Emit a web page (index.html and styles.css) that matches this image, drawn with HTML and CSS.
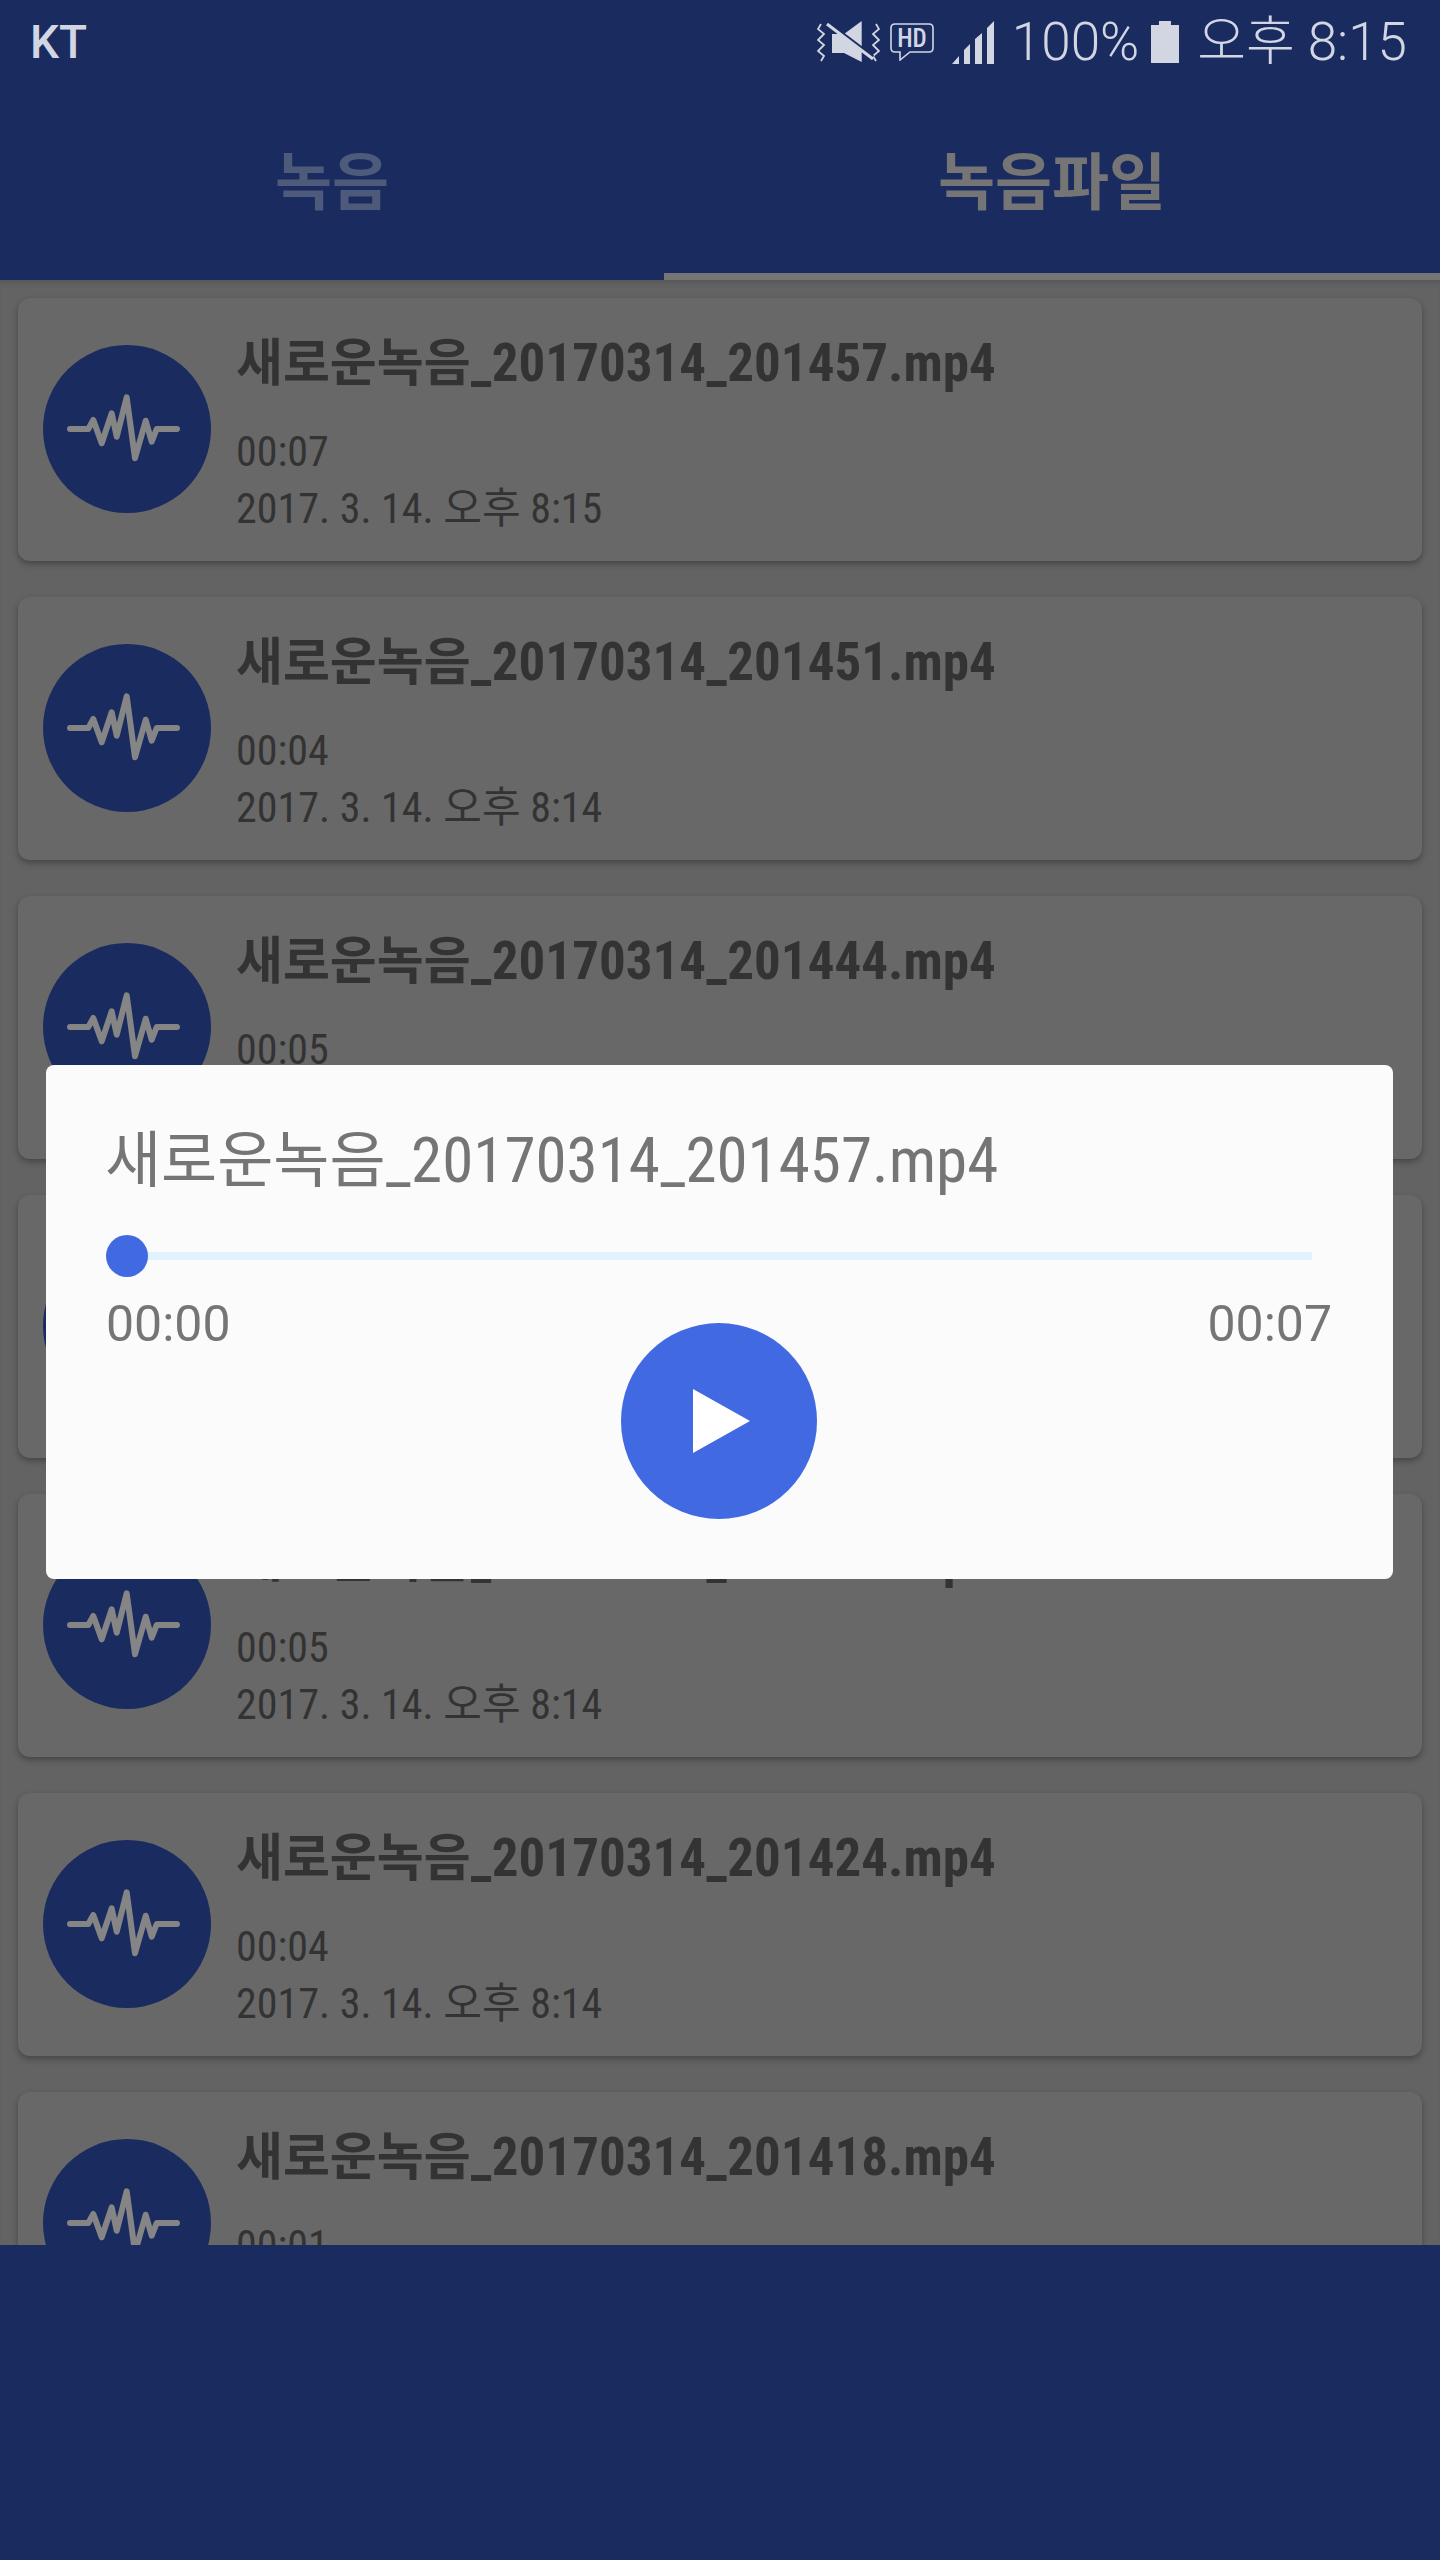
FILE: index.html
```html
<!DOCTYPE html>
<html lang="ko">
<head>
<meta charset="utf-8">
<title>녹음파일</title>
<link rel="stylesheet" href="styles.css">
</head>
<body>
<div class="app">
  <header class="top">
    <div class="status">
      <span class="carrier">KT</span>
      <div class="status-right">
        <svg class="ic-mute" viewBox="0 0 63 42"><path d="M4 3 1 8l6 5-6 6 6 5-6 6 6 5-3 5M59 3l3 5-6 5 6 6-6 5 6 6-6 5 3 5" fill="none" stroke="#d2d6e3" stroke-width="1.8"/><path d="M15 13H27L44.7 0V41L27 32H15Z" fill="#d2d6e3"/><path d="M10 1 56 36" stroke="#1a2b5f" stroke-width="3.5"/><path d="M10 3 56 38" stroke="#d2d6e3" stroke-width="3"/></svg>
        <svg class="ic-hd" viewBox="0 0 44 38"><path d="M5 1H39Q43 1 43 5V25Q43 29 39 29H20L10 37V29H5Q1 29 1 25V5Q1 1 5 1Z" fill="none" stroke="#d2d6e3" stroke-width="1.6"/><text class="hd-text" x="22" y="24" text-anchor="middle">HD</text></svg>
        <svg class="ic-signal" viewBox="0 0 42 43"><path d="M0 43 7 35V43ZM12 43V29L18 23V43ZM23 43V18L30 12V43ZM35 43V7L42 0V43Z" fill="#d2d6e3"/></svg>
        <span class="pct">100%</span>
        <svg class="ic-batt" viewBox="0 0 28 42"><path d="M8 0H20V4H28V42H0V4H8Z" fill="#d2d6e3"/></svg>
        <span class="clock">오후 8:15</span>
      </div>
    </div>
    <nav class="tabs">
      <div class="tab">녹음</div>
      <div class="tab tab-on">녹음파일</div>
    </nav>
  </header>

  <main class="list">
    <article class="card">
      <div class="avatar"><svg viewBox="0 0 168 168"><circle cx="84" cy="84" r="84" fill="#1a2b60"/><path class="wave" d="M27 84H45.3L50.3 75 58.7 98.3 68.7 68.3 73.7 91.7 83.7 52.3 92 113.3 102.7 75.7 108.7 96.7 113.7 84H134"/></svg></div>
      <div class="info"><h2 class="name"><span class="name-ko">새로운녹음</span>_20170314_201457.mp4</h2><p class="meta">00:07</p><p class="meta">2017. 3. 14. 오후 8:15</p></div>
    </article>
    <article class="card">
      <div class="avatar"><svg viewBox="0 0 168 168"><circle cx="84" cy="84" r="84" fill="#1a2b60"/><path class="wave" d="M27 84H45.3L50.3 75 58.7 98.3 68.7 68.3 73.7 91.7 83.7 52.3 92 113.3 102.7 75.7 108.7 96.7 113.7 84H134"/></svg></div>
      <div class="info"><h2 class="name"><span class="name-ko">새로운녹음</span>_20170314_201451.mp4</h2><p class="meta">00:04</p><p class="meta">2017. 3. 14. 오후 8:14</p></div>
    </article>
    <article class="card">
      <div class="avatar"><svg viewBox="0 0 168 168"><circle cx="84" cy="84" r="84" fill="#1a2b60"/><path class="wave" d="M27 84H45.3L50.3 75 58.7 98.3 68.7 68.3 73.7 91.7 83.7 52.3 92 113.3 102.7 75.7 108.7 96.7 113.7 84H134"/></svg></div>
      <div class="info"><h2 class="name"><span class="name-ko">새로운녹음</span>_20170314_201444.mp4</h2><p class="meta">00:05</p><p class="meta">2017. 3. 14. 오후 8:14</p></div>
    </article>
    <article class="card">
      <div class="avatar"><svg viewBox="0 0 168 168"><circle cx="84" cy="84" r="84" fill="#1a2b60"/><path class="wave" d="M27 84H45.3L50.3 75 58.7 98.3 68.7 68.3 73.7 91.7 83.7 52.3 92 113.3 102.7 75.7 108.7 96.7 113.7 84H134"/></svg></div>
      <div class="info"><h2 class="name"><span class="name-ko">새로운녹음</span>_20170314_201437.mp4</h2><p class="meta">00:05</p><p class="meta">2017. 3. 14. 오후 8:14</p></div>
    </article>
    <article class="card">
      <div class="avatar"><svg viewBox="0 0 168 168"><circle cx="84" cy="84" r="84" fill="#1a2b60"/><path class="wave" d="M27 84H45.3L50.3 75 58.7 98.3 68.7 68.3 73.7 91.7 83.7 52.3 92 113.3 102.7 75.7 108.7 96.7 113.7 84H134"/></svg></div>
      <div class="info"><h2 class="name"><span class="name-ko">새로운녹음</span>_20170314_201431.mp4</h2><p class="meta">00:05</p><p class="meta">2017. 3. 14. 오후 8:14</p></div>
    </article>
    <article class="card">
      <div class="avatar"><svg viewBox="0 0 168 168"><circle cx="84" cy="84" r="84" fill="#1a2b60"/><path class="wave" d="M27 84H45.3L50.3 75 58.7 98.3 68.7 68.3 73.7 91.7 83.7 52.3 92 113.3 102.7 75.7 108.7 96.7 113.7 84H134"/></svg></div>
      <div class="info"><h2 class="name"><span class="name-ko">새로운녹음</span>_20170314_201424.mp4</h2><p class="meta">00:04</p><p class="meta">2017. 3. 14. 오후 8:14</p></div>
    </article>
    <article class="card">
      <div class="avatar"><svg viewBox="0 0 168 168"><circle cx="84" cy="84" r="84" fill="#1a2b60"/><path class="wave" d="M27 84H45.3L50.3 75 58.7 98.3 68.7 68.3 73.7 91.7 83.7 52.3 92 113.3 102.7 75.7 108.7 96.7 113.7 84H134"/></svg></div>
      <div class="info"><h2 class="name"><span class="name-ko">새로운녹음</span>_20170314_201418.mp4</h2><p class="meta">00:01</p><p class="meta">2017. 3. 14. 오후 8:14</p></div>
    </article>
  </main>

  <footer class="bottom"></footer>

  <section class="dialog">
    <h1 class="dlg-title"><span class="dlg-ko">새로운녹음</span>_20170314_201457.mp4</h1>
    <div class="seek"><span class="thumb"></span><span class="track"></span></div>
    <div class="times"><span>00:00</span><span>00:07</span></div>
    <button class="play" type="button"><svg viewBox="0 0 196 196"><path d="M72 66 129 98 72 130Z" fill="#fff"/></svg></button>
  </section>
</div>
</body>
</html>
```
FILE: styles.css
```css
* { box-sizing: border-box; }
html, body { margin: 0; padding: 0; }
body { font-family: "Roboto Condensed", "Liberation Sans Narrow", Roboto, "Noto Sans CJK KR", sans-serif; font-stretch: condensed; }
.app { position: relative; width: 1440px; height: 2560px; display: flex; flex-direction: column; background: #636363; overflow: hidden; }

.top { height: 280px; flex: none; background: #1a2b5f; display: flex; flex-direction: column; }
.status { height: 84px; display: flex; justify-content: space-between; align-items: center; padding: 0 33px 0 30px; color: #d2d6e3; font-family: Roboto, "Noto Sans CJK KR", sans-serif; font-stretch: normal; }
.carrier { font-size: 46px; font-weight: 500; line-height: 1; }
.status-right { display: flex; align-items: center; }
.status-right svg { display: block; flex: none; }
.ic-mute { width: 63px; height: 42px; margin-right: 10px; }
.ic-hd { width: 44px; height: 38px; margin-right: 18px; }
.hd-text { font-family: "Roboto Condensed", Roboto, sans-serif; font-stretch: condensed; font-size: 25px; font-weight: 500; fill: #d2d6e3; }
.ic-signal { width: 42px; height: 43px; margin-right: 18px; }
.pct { font-size: 53px; line-height: 1; font-weight: 300; }
.ic-batt { width: 28px; height: 42px; margin: 0 18px 0 12px; }
.clock { font-size: 53px; line-height: 1; font-weight: 300; }

.tabs { flex: 1; display: grid; grid-template-columns: 664px 776px; }
.tab { display: flex; align-items: center; justify-content: center; padding-bottom: 8px; font-family: "Noto Sans CJK KR", sans-serif; font-size: 62px; font-weight: 700; color: #4e5a7a; }
.tab-on { color: #757575; border-bottom: 7px solid #757575; padding-bottom: 1px; }

.list { flex: 1; min-height: 0; overflow: hidden; padding: 18px 18px 0; display: flex; flex-direction: column; gap: 36px; background: #636363; box-shadow: inset 0 6px 6px -4px rgba(0,0,0,.15); }
.card { flex: none; height: 263px; background: #686868; border-radius: 12px; box-shadow: 0 3px 6px rgba(0,0,0,.3); display: flex; align-items: center; padding: 0 25px 2px; gap: 25px; }
.avatar { width: 168px; height: 168px; flex: none; }
.avatar svg { display: block; width: 100%; height: 100%; }
.wave { fill: none; stroke: #858585; stroke-width: 6; stroke-linecap: round; stroke-linejoin: round; }
.info { align-self: flex-start; padding-top: 35px; min-width: 0; }
.name { margin: 0 0 29px; font-size: 53px; line-height: 60px; font-weight: 700; color: #333; white-space: nowrap; }
.name-ko { font-size: 51px; }
.meta { margin: 0; font-size: 42px; line-height: 57px; font-weight: 400; color: #333; white-space: nowrap; }

.bottom { height: 315px; flex: none; background: #1a2b5f; }

.dialog { position: absolute; left: 46px; top: 1065px; width: 1347px; height: 514px; background: #fbfbfb; border-radius: 8px; padding: 58px 61px 0 60px; }
.dlg-title { margin: 0 0 0 -1px; font-size: 63px; line-height: 76px; font-weight: 400; color: #757575; white-space: nowrap; }
.dlg-ko { font-size: 61px; }
.seek { position: relative; height: 42px; margin-top: 36px; width: 1206px; display: flex; align-items: center; }
.thumb { position: absolute; left: 0; top: 0; width: 42px; height: 42px; border-radius: 50%; background: #4169e1; }
.track { display: block; width: 100%; height: 8px; background: #dff2fe; }
.times { display: flex; justify-content: space-between; margin-top: 18px; font-family: Roboto, sans-serif; font-stretch: normal; font-size: 50px; line-height: 58px; color: #757575; }
.play { position: absolute; left: 575px; top: 258px; width: 196px; height: 196px; padding: 0; border: 0; border-radius: 50%; background: #4169e1; }
.play svg { display: block; width: 100%; height: 100%; }
```
